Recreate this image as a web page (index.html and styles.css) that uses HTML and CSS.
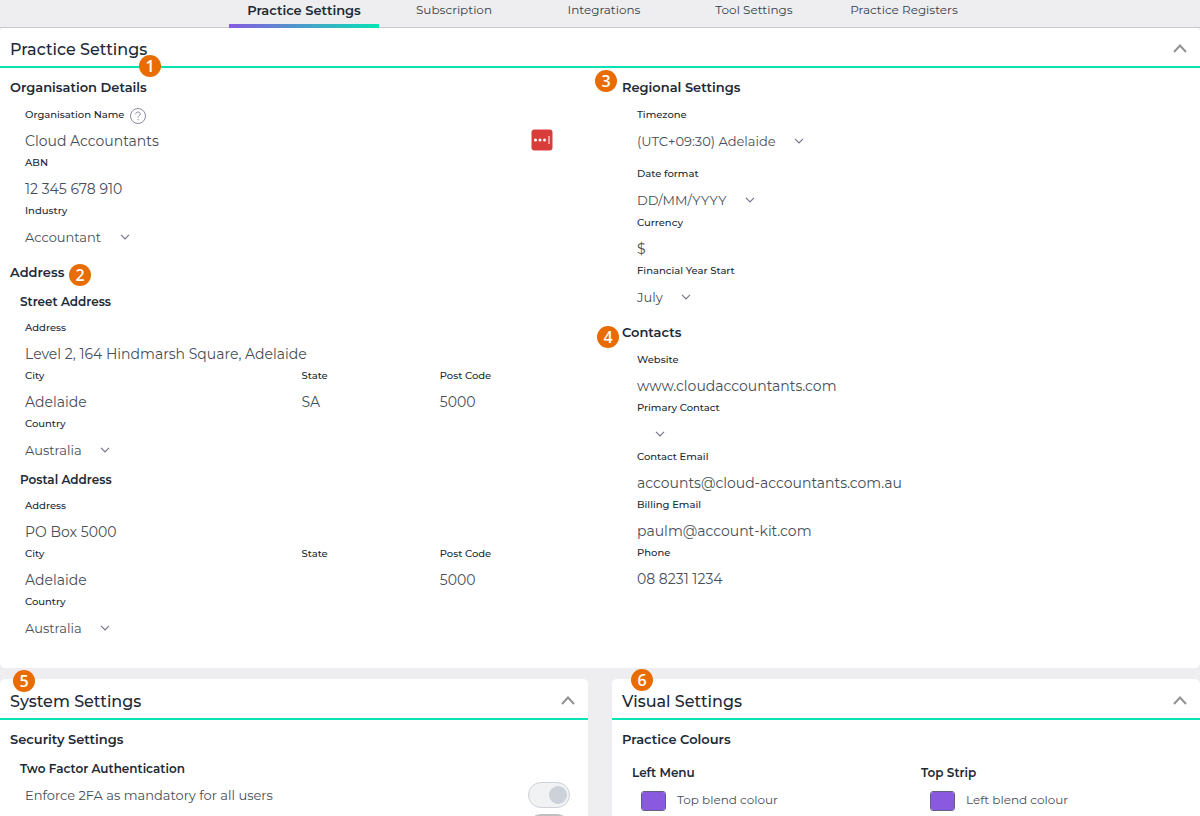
FILE: index.html
```html
<!DOCTYPE html>
<html lang="en">

<head>
    <meta charset="UTF-8">
    <meta name="viewport" content="width=device-width, initial-scale=1.0">
    <title>Practice Settings</title>
    <link rel="stylesheet" href="styles.css">
</head>

<body>
    <nav class="tabs">
        <a class="tab active" href="#practice">Practice Settings</a>
        <a class="tab" href="#subscription">Subscription</a>
        <a class="tab" href="#integrations">Integrations</a>
        <a class="tab" href="#tools">Tool Settings</a>
        <a class="tab" href="#registers">Practice Registers</a>
    </nav>

    <main>
        <section class="panel" id="practice">
            <header class="panel-head">
                <h2>Practice Settings</h2>
                <button class="collapse" type="button" aria-label="Collapse">
                    <svg width="14" height="9" viewBox="0 0 14 9"><path d="M1 8l6-6.5L13 8" /></svg>
                </button>
                <span class="badge badge1">1</span>
            </header>
            <div class="columns practice-body">
                <div class="col">
                    <h3>Organisation Details</h3>
                    <div class="fields">
                        <div class="field">
                            <div class="label-row">
                                <label for="org">Organisation Name</label>
                                <svg class="help" width="18" height="18" viewBox="0 0 18 18">
                                    <circle cx="9" cy="9" r="7.5" />
                                    <path d="M6.7 7.2c0-1.4 1-2.2 2.3-2.2s2.3.8 2.3 2c0 1.6-2.3 1.7-2.3 3.5M9 12v1.2" />
                                </svg>
                            </div>
                            <div class="input-row">
                                <input id="org" type="text" value="Cloud Accountants">
                                <svg class="vault" width="22" height="22" viewBox="0 0 22 22">
                                    <rect x="0.5" y="0.5" width="21" height="21" rx="3" fill="#d93d3a" />
                                    <g fill="#fff">
                                        <circle cx="4.5" cy="11" r="1.5" />
                                        <circle cx="9" cy="11" r="1.5" />
                                        <circle cx="13.5" cy="11" r="1.5" />
                                        <rect x="17.5" y="7" width="1" height="8" />
                                    </g>
                                </svg>
                            </div>
                        </div>
                        <div class="field">
                            <label for="abn">ABN</label>
                            <input id="abn" type="text" value="12 345 678 910">
                        </div>
                        <div class="field">
                            <label for="industry">Industry</label>
                            <div class="select">
                                <select id="industry"><option>Accountant</option></select>
                                <svg width="10" height="6" viewBox="0 0 10 6"><path d="M1 .8l4 4 4-4" /></svg>
                            </div>
                        </div>
                    </div>

                    <h3 class="with-badge">Address<span class="badge badge2">2</span></h3>
                    <h4>Street Address</h4>
                    <div class="fields">
                        <div class="field">
                            <label for="street">Address</label>
                            <input id="street" type="text" value="Level 2, 164 Hindmarsh Square, Adelaide">
                        </div>
                        <div class="city-row">
                            <div class="field">
                                <label for="city">City</label>
                                <input id="city" type="text" value="Adelaide">
                            </div>
                            <div class="field">
                                <label for="state">State</label>
                                <input id="state" type="text" value="SA">
                            </div>
                            <div class="field">
                                <label for="postcode">Post Code</label>
                                <input id="postcode" type="text" value="5000">
                            </div>
                        </div>
                        <div class="field">
                            <label for="country">Country</label>
                            <div class="select">
                                <select id="country"><option>Australia</option></select>
                                <svg width="10" height="6" viewBox="0 0 10 6"><path d="M1 .8l4 4 4-4" /></svg>
                            </div>
                        </div>
                    </div>

                    <h4>Postal Address</h4>
                    <div class="fields">
                        <div class="field">
                            <label for="pstreet">Address</label>
                            <input id="pstreet" type="text" value="PO Box 5000">
                        </div>
                        <div class="city-row">
                            <div class="field">
                                <label for="pcity">City</label>
                                <input id="pcity" type="text" value="Adelaide">
                            </div>
                            <div class="field">
                                <label for="pstate">State</label>
                                <input id="pstate" type="text" value="">
                            </div>
                            <div class="field">
                                <label for="ppostcode">Post Code</label>
                                <input id="ppostcode" type="text" value="5000">
                            </div>
                        </div>
                        <div class="field">
                            <label for="pcountry">Country</label>
                            <div class="select">
                                <select id="pcountry"><option>Australia</option></select>
                                <svg width="10" height="6" viewBox="0 0 10 6"><path d="M1 .8l4 4 4-4" /></svg>
                            </div>
                        </div>
                    </div>
                </div>

                <div class="col">
                    <h3 class="with-badge">Regional Settings<span class="badge badge3">3</span></h3>
                    <div class="fields">
                        <div class="field spaced">
                            <label for="timezone">Timezone</label>
                            <div class="select">
                                <select id="timezone"><option>(UTC+09:30) Adelaide</option></select>
                                <svg width="10" height="6" viewBox="0 0 10 6"><path d="M1 .8l4 4 4-4" /></svg>
                            </div>
                        </div>
                        <div class="field">
                            <label for="dateformat">Date format</label>
                            <div class="select">
                                <select id="dateformat"><option>DD/MM/YYYY</option></select>
                                <svg width="10" height="6" viewBox="0 0 10 6"><path d="M1 .8l4 4 4-4" /></svg>
                            </div>
                        </div>
                        <div class="field">
                            <label for="currency">Currency</label>
                            <input id="currency" type="text" value="$">
                        </div>
                        <div class="field">
                            <label for="year">Financial Year Start</label>
                            <div class="select">
                                <select id="year"><option>July</option></select>
                                <svg width="10" height="6" viewBox="0 0 10 6"><path d="M1 .8l4 4 4-4" /></svg>
                            </div>
                        </div>
                    </div>

                    <h3 class="with-badge">Contacts<span class="badge badge4">4</span></h3>
                    <div class="fields">
                        <div class="field">
                            <label for="website">Website</label>
                            <input id="website" type="text" value="www.cloudaccountants.com">
                        </div>
                        <div class="field">
                            <label for="primary">Primary Contact</label>
                            <div class="select">
                                <select id="primary"></select>
                                <svg width="10" height="6" viewBox="0 0 10 6"><path d="M1 .8l4 4 4-4" /></svg>
                            </div>
                        </div>
                        <div class="field">
                            <label for="email">Contact Email</label>
                            <input id="email" type="text" value="accounts@cloud-accountants.com.au">
                        </div>
                        <div class="field">
                            <label for="billing">Billing Email</label>
                            <input id="billing" type="text" value="paulm@account-kit.com">
                        </div>
                        <div class="field">
                            <label for="phone">Phone</label>
                            <input id="phone" type="text" value="08 8231 1234">
                        </div>
                    </div>
                </div>
            </div>
        </section>

        <div class="columns">
            <section class="panel">
                <header class="panel-head">
                    <h2>System Settings</h2>
                    <button class="collapse" type="button" aria-label="Collapse">
                        <svg width="14" height="9" viewBox="0 0 14 9"><path d="M1 8l6-6.5L13 8" /></svg>
                    </button>
                    <span class="badge badge5">5</span>
                </header>
                <div class="col">
                    <h3>Security Settings</h3>
                    <h4 class="tight">Two Factor Authentication</h4>
                    <div class="toggle-row">
                        <label for="mfa">Enforce 2FA as mandatory for all users</label>
                        <input id="mfa" class="toggle" type="checkbox">
                    </div>
                    <div class="toggle-row">
                        <input class="toggle dark" type="checkbox">
                    </div>
                </div>
            </section>

            <section class="panel">
                <header class="panel-head">
                    <h2>Visual Settings</h2>
                    <button class="collapse" type="button" aria-label="Collapse">
                        <svg width="14" height="9" viewBox="0 0 14 9"><path d="M1 8l6-6.5L13 8" /></svg>
                    </button>
                    <span class="badge badge6">6</span>
                </header>
                <div class="col">
                    <h3>Practice Colours</h3>
                    <div class="colours">
                        <div>
                            <h4>Left Menu</h4>
                            <div class="swatch-row">
                                <input id="topblend" type="color" value="#8959e0">
                                <label for="topblend">Top blend colour</label>
                            </div>
                        </div>
                        <div>
                            <h4>Top Strip</h4>
                            <div class="swatch-row">
                                <input id="leftblend" type="color" value="#8959e0">
                                <label for="leftblend">Left blend colour</label>
                            </div>
                        </div>
                    </div>
                </div>
            </section>
        </div>
    </main>
</body>

</html>
```

FILE: styles.css
```css
* {
    box-sizing: border-box;
}

body {
    height: 100vh;
    margin: 0;
    overflow: hidden;
    background-color: #eeeef0;
    color: #212936;
    font-family: Montserrat, Inter, sans-serif;
    font-size: 14px;
}

h2,
h3,
h4 {
    margin: 0;
    font-weight: 600;
}

h2 {
    font-size: 16px;
    font-weight: 500;
    line-height: 20px;
}

h3 {
    font-size: 13px;
    line-height: 20px;
}

h4 {
    margin: 11px 0 9px 10px;
    font-size: 12px;
    line-height: 18px;
}

/* tabs */
.tabs {
    display: flex;
    justify-content: center;
    position: relative;
    z-index: 1;
    height: 28px;
    margin-bottom: -1px;
    padding-left: 8px;
    border-bottom: 1px solid #c8c8ca;
}

.tab {
    width: 150px;
    height: 28px;
    color: #363d49;
    font-size: 12px;
    line-height: 20px;
    text-align: center;
    text-decoration: none;
}

.tab.active {
    border-bottom: 4px solid;
    border-image: linear-gradient(to right, #8959e0, #07e3b5) 1;
    color: #212936;
    font-size: 13px;
    font-weight: 600;
}

/* panels */
.panel {
    border-radius: 5px;
    background-color: #fff;
}

.panel-head {
    display: flex;
    align-items: center;
    justify-content: space-between;
    position: relative;
    height: 41px;
    padding: 7px 10px 0;
    border-bottom: 2px solid #07e3b5;
}

.collapse {
    display: flex;
    padding: 0 3px 4px;
    border: 0;
    background: none;
}

.collapse path {
    fill: none;
    stroke: #929292;
    stroke-width: 2;
}

.columns {
    display: grid;
    grid-template-columns: minmax(0, 1fr) minmax(0, 1fr);
    gap: 24px;
}

.practice-body {
    margin-bottom: 11px;
    padding-bottom: 25px;
}

.col {
    padding: 9px 10px 0;
}

/* fields */
.fields {
    margin-left: 15px;
    padding: 10px 0;
}

h4 + .fields {
    padding: 0;
}

.fields + h4 {
    margin-top: 6px;
}

.field {
    display: flex;
    flex-direction: column;
    gap: 2px;
}

.spaced {
    margin-bottom: 10px;
}

.field label {
    font-size: 10px;
    font-weight: 500;
    line-height: 16px;
}

.label-row,
.input-row {
    display: flex;
    align-items: center;
}

.label-row {
    align-items: flex-start;
    gap: 5px;
    height: 16px;
}

.input-row {
    padding-right: 25px;
}

.input-row input {
    flex: 1;
}

.help {
    fill: none;
    stroke: #8c8a9f;
}

.field input,
.field select {
    min-width: 0;
    padding: 0;
    border: 0;
    background: none;
    color: #474e58;
    font-family: inherit;
    font-size: 14px;
    font-weight: 400;
}

.field input {
    height: 30px;
    padding-top: 1px;
}

.field select {
    appearance: none;
    height: 31px;
    font-size: 13px;
}

.select {
    display: flex;
    align-items: center;
    gap: 18px;
}

.select path {
    fill: none;
    stroke: #77758a;
    stroke-width: 1.2;
}

.city-row {
    display: grid;
    grid-template-columns: minmax(0, 2fr) minmax(0, 1fr) minmax(0, 1fr);
}

/* toggles */
.tight {
    margin-bottom: 1px;
}

.toggle-row {
    display: flex;
    align-items: center;
    justify-content: space-between;
    height: 32px;
    padding: 0 8px 0 15px;
}

.toggle-row label,
.swatch-row label {
    color: #474e58;
    font-size: 13px;
}

.swatch-row label {
    font-size: 12px;
    line-height: 18px;
}

.toggle {
    appearance: none;
    width: 42px;
    height: 26px;
    margin: 0 0 0 auto;
    padding: 3px 2px;
    border: 1px solid #cdd1d8;
    border-radius: 13px;
    background-color: #f0f2f4;
}

.toggle::before {
    content: "";
    display: block;
    width: 18px;
    height: 18px;
    margin-left: auto;
    border-radius: 50%;
    background-color: #cdd1d9;
}

.toggle.dark {
    border-color: #bfbfc1;
    background-color: #bfbfc1;
}

/* colours */
.colours {
    display: grid;
    grid-template-columns: 1fr 1fr;
    margin-right: -10px;
    padding-top: 4px;
}

.swatch-row {
    display: flex;
    align-items: flex-start;
    gap: 11px;
    padding-left: 19px;
}

.swatch-row input {
    appearance: none;
    width: 25px;
    height: 20px;
    padding: 0;
    border: 1px solid #5f6180;
    border-radius: 3px;
    overflow: hidden;
}

.swatch-row input::-webkit-color-swatch-wrapper {
    padding: 0;
}

.swatch-row input::-webkit-color-swatch {
    border: 0;
}

/* numbered markers */
.with-badge {
    position: relative;
}

.badge {
    position: absolute;
    width: 22px;
    height: 22px;
    border-radius: 50%;
    background-color: #e86c00;
    color: #fff;
    font-family: "Open Sans", sans-serif;
    font-size: 16px;
    font-weight: 600;
    line-height: 22px;
    text-align: center;
}

.badge1 {
    top: 28px;
    left: 139px;
}

.badge2 {
    top: 2px;
    left: 59px;
}

.badge3 {
    top: -7px;
    left: -27px;
}

.badge4 {
    top: 4px;
    left: -25px;
}

.badge5 {
    top: -9px;
    left: 13px;
}

.badge6 {
    top: -10px;
    left: 19px;
}
```
